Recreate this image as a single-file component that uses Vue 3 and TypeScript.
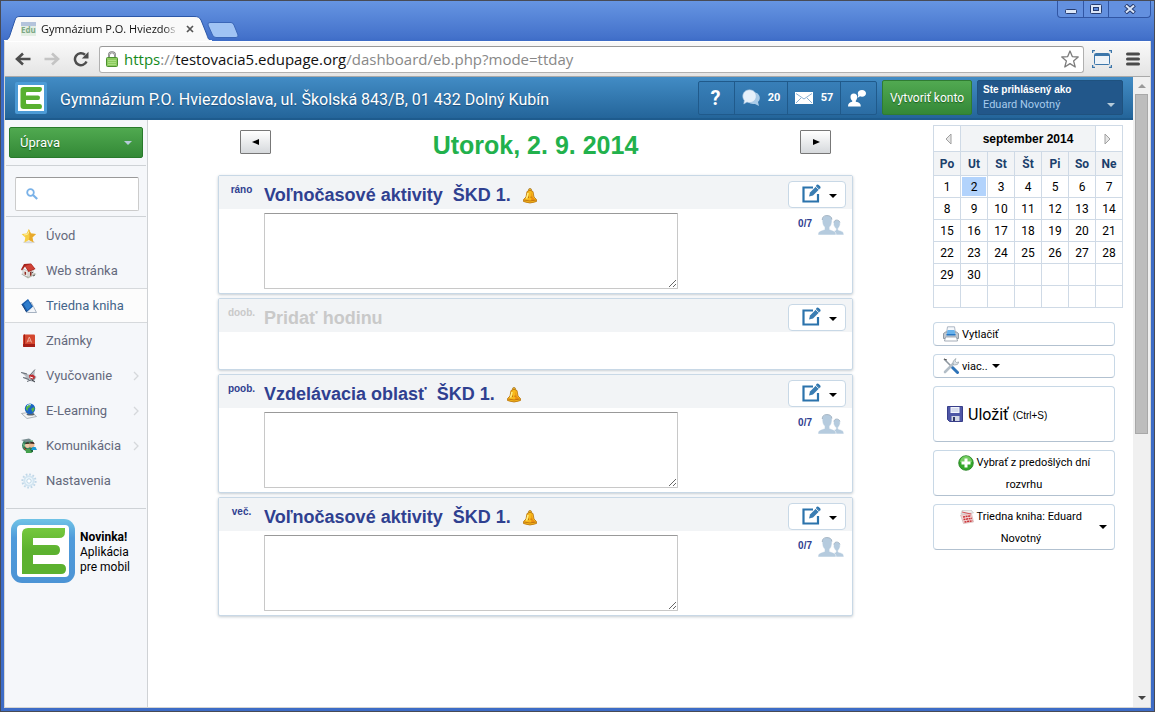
<script setup lang="ts">
import { ref } from 'vue'

interface MenuItem {
  icon: string
  label: string
  active?: boolean
  submenu?: boolean
}

interface Lesson {
  id: number
  period: string
  title: string
  empty?: boolean
  attendance?: string
}

const menu: MenuItem[] = [
  { icon: 'star', label: 'Úvod' },
  { icon: 'house', label: 'Web stránka' },
  { icon: 'notebook', label: 'Triedna kniha', active: true },
  { icon: 'book', label: 'Známky' },
  { icon: 'teaching', label: 'Vyučovanie', submenu: true },
  { icon: 'globe', label: 'E-Learning', submenu: true },
  { icon: 'people', label: 'Komunikácia', submenu: true },
  { icon: 'gear', label: 'Nastavenia' },
]

const lessons: Lesson[] = [
  { id: 1, period: 'ráno', title: 'Voľnočasové aktivity \u00a0ŠKD 1.', attendance: '0/7' },
  { id: 2, period: 'doob.', title: 'Pridať hodinu', empty: true },
  { id: 3, period: 'poob.', title: 'Vzdelávacia oblasť \u00a0ŠKD 1.', attendance: '0/7' },
  { id: 4, period: 'več.', title: 'Voľnočasové aktivity \u00a0ŠKD 1.', attendance: '0/7' },
]

const notes = ref<Record<number, string>>({ 1: '', 3: '', 4: '' })
const search = ref('')
const selectedDay = ref(2)

const weekdays = ['Po', 'Ut', 'St', 'Št', 'Pi', 'So', 'Ne']
const weeks: (number | null)[][] = Array.from({ length: 6 }, (_, w) =>
  Array.from({ length: 7 }, (_, d) => {
    const day = w * 7 + d + 1
    return day <= 30 ? day : null
  }),
)
</script>

<template>
  <div class="window">
    <header class="titlebar">
      <div class="tab">
        <svg class="tab-shape" viewBox="0 0 208 25" width="208" height="25" aria-hidden="true">
          <path d="M0 25 C4 24 5 22 6 19 L11 4 C12 1 13 .5 16 .5 H190 C194 .5 195 1 197 4 L203 19 C204 23 205 24 208 25Z" fill="#f9f9f9" stroke="#2b57a8" stroke-width="1" />
          <path d="M0 24 H208 V25 H0Z" fill="#f9f9f9" />
        </svg>
        <span class="favicon" aria-hidden="true">Edu</span>
        <span class="tab-title">Gymnázium P.O. Hviezdos</span>
        <button class="tab-close" aria-label="Zavrieť kartu">
          <svg viewBox="0 0 8 8" width="8" height="8"><path d="M1 1l6 6M7 1l-6 6" stroke="#555" stroke-width="1.7" /></svg>
        </button>
      </div>
      <button class="new-tab" aria-label="Nová karta">
        <svg viewBox="0 0 32 16" width="32" height="16">
          <path d="M3 .5H24Q26 .5 27 3L31 13Q31.500 15.500 29 15.500H9Q6.500 15.500 5.500 13L1 3Q.5 .5 3 .5Z" fill="#a0c3f4" stroke="#3a66b8" />
        </svg>
      </button>
      <div class="window-buttons">
        <button aria-label="Minimalizovať">
          <svg viewBox="0 0 12 10" width="12" height="10"><rect x=".5" y="5.500" width="11" height="4" rx="1" fill="#dbe6f8" stroke="#263c70" /></svg>
        </button>
        <button aria-label="Obnoviť">
          <svg viewBox="0 0 12 10" width="12" height="10"><rect x=".5" y=".5" width="11" height="9" rx="1" fill="#dbe6f8" stroke="#263c70" /><rect x="3.500" y="3.500" width="5" height="3" fill="#5c89dc" stroke="#263c70" /></svg>
        </button>
        <button class="wide" aria-label="Zavrieť">
          <svg viewBox="0 0 12 10" width="12" height="10"><path d="M1.500 1l9 8M10.500 1l-9 8" stroke="#263c70" stroke-width="4" /><path d="M2 1.500l8 7M10 1.500l-8 7" stroke="#dbe6f8" stroke-width="2" /></svg>
        </button>
      </div>
    </header>

    <div class="content">
      <div class="toolbar">
        <button class="nav-button" aria-label="Späť">
          <svg viewBox="0 0 16 14" width="16" height="14"><path d="M15.500 7H3M8 1.500L2 7l6 5.500" fill="none" stroke="#4d4d4d" stroke-width="2.600" /></svg>
        </button>
        <button class="nav-button" aria-label="Dopredu">
          <svg viewBox="0 0 16 14" width="16" height="14"><path d="M.5 7H13M8 1.500L14 7l-6 5.500" fill="none" stroke="#c4c4c4" stroke-width="2.600" /></svg>
        </button>
        <button class="nav-button" aria-label="Obnoviť stránku">
          <svg viewBox="0 0 16 16" width="16" height="16"><path d="M13.500 10.500A6 6 0 1 1 12 3.700" fill="none" stroke="#4d4d4d" stroke-width="2.500" /><path d="M15.500.8V7.500H8.800Z" fill="#4d4d4d" /></svg>
        </button>
        <div class="address">
          <svg viewBox="0 0 12 16" width="12" height="16" aria-hidden="true">
            <path d="M3 8V4.200a3 3 0 0 1 6 0V8" fill="none" stroke="#7b7b7b" stroke-width="2" />
            <path d="M3 8V4.200a3 3 0 0 1 6 0V8" fill="none" stroke="#d6d6d6" stroke-width=".7" />
            <rect x=".5" y="6.500" width="11" height="9" rx="1" fill="#8ccb5e" stroke="#4c9130" />
            <path d="M2 9.500h8M2 11.500h8M2 13.500h8" stroke="#a9dd82" />
          </svg>
          <div class="url" role="textbox" aria-label="Adresa" tabindex="0"><span class="scheme">https</span>://<span class="host">testovacia5.edupage.org</span>/dashboard/eb.php?mode=ttday</div>
          <button class="bookmark" aria-label="Pridať záložku">
            <svg viewBox="0 0 18 18" width="18" height="18"><path d="M9 1l2.300 5.600 5.900.4-4.600 3.900L14.200 17 9 13.600 3.800 17l1.600-6.100L.8 7l5.900-.4Z" fill="#fff" stroke="#7c7c7c" stroke-width="1.300" stroke-linejoin="round" /></svg>
          </button>
        </div>
        <button class="nav-button" aria-label="Snímka obrazovky">
          <svg viewBox="0 0 20 18" width="20" height="18"><rect x="2.500" y="3.500" width="15" height="11" rx="1" fill="#eef3f8" stroke="#3c76aa" /><path d="M3 5h14" stroke="#3c76aa" stroke-width="2" /><path d="M.5 3V.5H3M17 .5h2.500V3M.5 15v2.500H3M17 17.500h2.500V15" fill="none" stroke="#3c76aa" stroke-width="1.500" /></svg>
        </button>
        <button class="nav-button" aria-label="Ponuka">
          <svg viewBox="0 0 14 14" width="14" height="14"><path d="M1.500 2h11M1.500 7h11M1.500 12h11" stroke="#4a4a4a" stroke-width="3" stroke-linecap="round" /></svg>
        </button>
      </div>

      <div class="viewport">
        <div class="page">
          <div class="site-header">
            <svg class="logo-small" viewBox="0 0 32 32" width="32" height="32" aria-hidden="true">
              <rect width="32" height="32" rx="2" fill="#4d9bd6" />
              <rect x="3" y="3" width="26" height="26" fill="#fff" />
              <path d="M8.500 5H25Q27 5 27 7T25 10H12Q11 10 11 11V13.500H23Q25 13.500 25 15.800T23 18H11V21Q11 22 12 22H25Q27 22 27 24.500T25 27H8.500Q5.500 27 5.500 24V8Q5.500 5 8.500 5Z" fill="#58b030" />
            </svg>
            <h1>Gymnázium P.O. Hviezdoslava, ul. Školská 843/B, 01 432 Dolný Kubín</h1>
            <div class="status">
              <button class="help" aria-label="Pomoc">?</button>
              <button class="counter">
                <svg viewBox="0 0 18 18" width="18" height="18" aria-hidden="true">
                  <path d="M12 3.500a5.500 5.500 0 0 1 4 9.500l1 4-4-2.100A7 6 0 0 1 6 13Z" fill="#a9cbe8" />
                  <path d="M7.500.8c3.900 0 6.700 2.900 6.700 6.400s-2.800 6.400-6.700 6.400c-.9 0-1.800-.1-2.500-.5L1.800 15l.5-3.600C1.300 10.300.8 8.700.8 7.200.8 3.700 3.600.8 7.500.8Z" fill="#e6f0fa" stroke="#9dc0df" stroke-width=".6" />
                </svg>
                <span>20</span>
              </button>
              <button class="counter">
                <svg viewBox="0 0 18 12" width="18" height="12" aria-hidden="true">
                  <rect width="18" height="12" fill="#fff" />
                  <path d="M1 1.500l8 5.500 8-5.500M1 11l5-5M17 11l-5-5" fill="none" stroke="#7aa6cd" stroke-width=".9" />
                </svg>
                <span>57</span>
              </button>
              <button class="contact" aria-label="Kontakt">
                <svg viewBox="0 0 18 18" width="18" height="18">
                  <path d="M5.800 4.500c2.200 0 3.400 1.500 3.400 3.400S8.300 11 7.800 11.600v1.200c3.500.6 5 1.800 5 4.700H0c0-2.900 1.500-4.100 4.200-4.700v-1.200C3.400 11 2.500 9.800 2.500 7.900S3.600 4.500 5.800 4.500Z" fill="#fff" />
                  <path d="M14 1c2.400 0 4 1.300 4 3.300s-1.600 3.400-4 3.400c-.9 0-1.500-.1-2-.4L9.500 9l.8-3C10 5.500 9.800 5 9.800 4.300 9.800 2.300 11.500 1 14 1Z" fill="#fff" />
                </svg>
              </button>
            </div>
            <button class="create-account">Vytvoriť konto</button>
            <button class="user">
              <span class="user-text"><b>Ste prihlásený ako</b><span>Eduard Novotný</span></span>
              <i class="caret light"></i>
            </button>
          </div>

          <div class="columns">
            <aside class="sidebar">
              <div class="edit-mode">
                <button>Úprava<i class="caret light"></i></button>
              </div>
              <div class="search-row">
                <label class="search">
                  <svg viewBox="0 0 12 12" width="12" height="12" aria-hidden="true"><circle cx="4.500" cy="4.500" r="3.300" fill="none" stroke="#7ab2e8" stroke-width="1.800" /><path d="M7 7l4.200 4" stroke="#7ab2e8" stroke-width="2.200" /></svg>
                  <input v-model="search" type="text" aria-label="Hľadať" />
                </label>
              </div>
              <nav>
                <a v-for="item in menu" :key="item.label" href="#" :class="{ active: item.active }">
                  <svg viewBox="0 0 16 16" width="16" height="16" aria-hidden="true">
                    <template v-if="item.icon === 'star'">
                      <ellipse cx="8" cy="14.200" rx="6" ry="1" fill="#d6d8da" />
                      <path d="M7.800 1l2.100 4.400 5.100.5-3.700 3.500 1.200 4.900-4.500-2.400-4.600 2.500.9-5L.6 6l5-.6Z" fill="#f7cf43" />
                      <path d="M7.800 1l2.100 4.400 5.100.5-3.700 3.500 1.200 4.900-4.500-2.400L8.500 8Z" fill="#e8a92c" />
                      <path d="M3 7l3.500-.6L8 3.500" fill="none" stroke="#fdeea0" />
                    </template>
                    <template v-else-if="item.icon === 'house'">
                      <path d="M0 11l7 4.500L15.500 11l-5-2Z" fill="#b4b8ab" />
                      <path d="M2 6l5 2v6l-5-2Z" fill="#f1efec" stroke="#999" stroke-width=".5" />
                      <path d="M7 8l6-3v6l-6 3Z" fill="#d9d5d2" />
                      <path d="M0 6.500l3-5.500L10 .5 14.500 6 7.500 9 4 3.500 1 7.500Z" fill="#a6231c" />
                      <path d="M4 3l6-2 3.500 4.700L8 8Z" fill="#cf4236" />
                      <path d="M3.500 8.500l1.600.6v3l-1.600-.6ZM9 9l1.500-.8v4L9 13Z" fill="#8d2c22" />
                      <path d="M10.500 10l1.500-.7M12 13l2-1" stroke="#555" />
                    </template>
                    <template v-else-if="item.icon === 'notebook'">
                      <path d="M10 4l5.500 10.500H6Z" fill="#f3f6fa" stroke="#90a0b2" stroke-width=".8" />
                      <path d="M.8 6L7 1l5 7.500-6.300 5.800Z" fill="#185cab" />
                      <path d="M2.800 6.200L7 2.600l3.500 5.600-4.200 4Z" fill="#2f7dcc" />
                      <path d="M.8 6l4.900 8.300" stroke="#143c74" />
                      <path d="M5.700 14.800l7-6" stroke="#dce5ef" />
                    </template>
                    <template v-else-if="item.icon === 'book'">
                      <path d="M2 2.500Q2 1.500 3 1.500H13Q14 1.500 14 2.500V14H3Q2 14 2 13Z" fill="#d4472f" />
                      <path d="M2 11h12v3H3q-1 0-1-1Z" fill="#a51f17" />
                      <path d="M3.500 1.500V14" stroke="#9d1f17" />
                      <path d="M6 9.500L8.300 4l2.300 5.500M7 8h2.700" fill="none" stroke="#f3b6a4" stroke-width=".9" />
                    </template>
                    <template v-else-if="item.icon === 'teaching'">
                      <path d="M0 4l4 .8 4 2L10 6l4-4.500L13.500 7l2 2-3 5-5-1.500L2 9.500l3-.7Z" fill="#b6bbc1" />
                      <path d="M0 4.500l6 1.500M2 9.500l6 2M14 1.500L9 7M6 13.500l8-3" stroke="#5b626b" stroke-width=".9" />
                      <path d="M8 7l4-.5 2.500 2.500L12 11.500 8.500 10Z" fill="#c02c31" />
                      <path d="M9 9l3 1" stroke="#fff" /><path d="M11 12l3 2" stroke="#34383e" />
                    </template>
                    <template v-else-if="item.icon === 'globe'">
                      <path d="M.5 10.500L10 9l5.500 4.500-9.500 2Z" fill="#f4f4f4" stroke="#8f989f" stroke-width=".7" />
                      <ellipse cx="9.500" cy="11.300" rx="4" ry="1.300" fill="#56646e" />
                      <circle cx="9" cy="5.800" r="5.200" fill="#1b64c4" />
                      <path d="M5 4q2-3 5-2.500L9 4 7 5.500 6.500 8 5 6.500ZM10 6l3-2 .7 2-2 3.300Z" fill="#56b548" />
                      <path d="M6 3q1.500-2 4-1.300" fill="none" stroke="#c6e7ef" />
                    </template>
                    <template v-else-if="item.icon === 'people'">
                      <circle cx="7" cy="7.500" r="6" fill="#3b8261" />
                      <path d="M0 2l8-1.500L12 3 5 4Z" fill="#798d91" />
                      <path d="M2 4l2 4 3 5-4-2ZM8 11l4-1v4l-4 1Z" fill="#1f643a" />
                      <path d="M2 5l2 2-1 3ZM9 2l3 0-1 2Z" fill="#8ccf9c" />
                      <circle cx="6.500" cy="7.500" r="2.500" fill="#edc8a8" /><circle cx="10.800" cy="7" r="2.700" fill="#e9b68f" />
                      <path d="M4 6q1-2.500 4-1.600l.4 1.400ZM8.500 5.500q1-2.600 4-1.500l1.200 2Z" fill="#37271f" />
                      <path d="M10 12l1.500-3H14.500L16 12Z" fill="#1b9bd8" />
                      <path d="M4.500 11h4.500l2 4H5Z" fill="#44a04c" /><path d="M3 10l2 2" stroke="#c23a28" />
                    </template>
                    <template v-else>
                      <circle cx="8" cy="8" r="6.600" fill="none" stroke="#bfd7e8" stroke-width="2" stroke-dasharray="1.700 1.750" />
                      <circle cx="8" cy="8" r="4.700" fill="#eef7fc" stroke="#d3e5f1" stroke-width="2" />
                      <circle cx="8" cy="8" r="2.200" fill="#fff" stroke="#aecbdf" stroke-width=".8" />
                    </template>
                  </svg>
                  <span>{{ item.label }}</span>
                  <svg v-if="item.submenu" class="chevron" viewBox="0 0 6 10" width="6" height="10" aria-hidden="true"><path d="M1 1l4 4-4 4" fill="none" stroke="#d5d8db" stroke-width="1.300" /></svg>
                </a>
              </nav>
              <a class="promo" href="#">
                <svg viewBox="0 0 64 64" width="64" height="64" aria-hidden="true">
                  <defs>
                    <linearGradient id="frame" x2="0" y2="1"><stop offset="0" stop-color="#70c3e6" /><stop offset=".3" stop-color="#4f9bdb" /><stop offset="1" stop-color="#4c94d5" /></linearGradient>
                    <linearGradient id="letter" x2="0" y2="1"><stop offset="0" stop-color="#76c83e" /><stop offset=".5" stop-color="#5cb12f" /></linearGradient>
                  </defs>
                  <rect width="64" height="64" rx="11" fill="url(#frame)" />
                  <rect x="6" y="6" width="52" height="52" rx="4" fill="#fff" />
                  <path d="M17 9H54V13Q54 19 48 19H22V26H44Q49 26 49 31T44 36H22V45H50Q55 45 55 50T50 55H11V15Q11 9 17 9Z" fill="url(#letter)" />
                </svg>
                <span><b>Novinka!</b><br />Aplikácia<br />pre mobil</span>
              </a>
            </aside>

            <main>
              <div class="day-bar">
                <button aria-label="Predchádzajúci deň"><svg viewBox="0 0 8 6" width="8" height="6"><path d="M0 3L7 0V6Z" /></svg></button>
                <h2>Utorok, 2. 9. 2014</h2>
                <button aria-label="Nasledujúci deň"><svg viewBox="0 0 8 6" width="8" height="6"><path d="M8 3L1 0V6Z" /></svg></button>
              </div>
              <section v-for="lesson in lessons" :key="lesson.id" class="card" :class="{ empty: lesson.empty }">
                <div class="card-head">
                  <span class="period">{{ lesson.period }}</span>
                  <h3>{{ lesson.title }}</h3>
                  <svg v-if="!lesson.empty" class="bell" viewBox="0 0 14 16" width="14" height="16" aria-hidden="true">
                    <circle cx="7" cy="2" r="1.500" fill="#f6c12d" stroke="#9a6413" stroke-width=".7" />
                    <path d="M4 3.500q3-2.500 6 0l1 5.500 2.500 2.500v2Q7 16.500.5 13.500v-2L3 9Z" fill="#f7b91c" stroke="#b6700d" stroke-width=".8" />
                    <path d="M5 5q-.5 3-1.500 5.500" fill="none" stroke="#ffef85" stroke-width="1.500" />
                    <path d="M8.500 4l1.200 5 2.500 3-4 1Z" fill="#ed8f12" />
                    <path d="M1 12q6 2 12 0M5.500 8.500v1.500M8 8.500v1.500" fill="none" stroke="#b5670d" stroke-width=".8" />
                  </svg>
                  <button class="edit" aria-label="Upraviť hodinu">
                    <svg viewBox="0 0 20 20" width="20" height="20">
                      <path d="M12 3.500H2.500V17.500H17V10" fill="none" stroke="#2b73ac" stroke-width="2.200" />
                      <path d="M8 12.500l1-4 6.500-6.500 3 3-6.500 6.500Z" fill="#3a7db2" />
                      <path d="M15 1.500Q16.500-.3 18 1.200L19 2.200Q20.300 3.500 18.700 5Z" fill="#2b73ac" />
                      <path d="M14.500 2.500l3.200 3.200" stroke="#fff" stroke-width=".8" />
                    </svg>
                    <i class="caret"></i>
                  </button>
                </div>
                <div class="card-body">
                  <template v-if="!lesson.empty">
                    <textarea v-model="notes[lesson.id]" :aria-label="`Poznámka – ${lesson.title}`"></textarea>
                    <a class="attendance" href="#">
                      <b>{{ lesson.attendance }}</b>
                      <svg viewBox="0 0 26 20" width="26" height="20" aria-hidden="true">
                        <path d="M14 20q.5-4 4-5l-.2-1.500C16 12 15.200 10 15.500 8c.3-2 1.500-3 3.200-3s3.300 1 3.500 3c.3 2-.6 4.200-2 5.300v1.700c3.500 1 5.800 1.500 5.800 5Z" fill="#b5cbde" stroke="#fff" stroke-width=".6" />
                        <path d="M0 20c0-3.500 2-4.200 6.500-5.500V12C4.800 10.500 4 8 4.200 4.500 4.400 1.500 6.500.5 9 .5s4.800 1 5 4C14.200 8 13.400 10.500 11.700 12v2.500C16 15.800 18 16.500 18 20Z" fill="#b5cbde" stroke="#fff" stroke-width=".5" />
                        <path d="M4.300 5C4.200 1.500 6.500.6 9 .6s4.700.9 4.900 3.900M16 7.500c.3-1.800 1.400-2.400 2.700-2.400s2.800.6 3.200 2.400" fill="none" stroke="#9aacbc" stroke-width=".9" />
                      </svg>
                    </a>
                  </template>
                </div>
              </section>
            </main>

            <div class="tools">
              <table class="calendar">
                <thead>
                  <tr class="month">
                    <td><button aria-label="Predchádzajúci mesiac"><svg viewBox="0 0 8 12" width="8" height="12"><path d="M1 6l5-5v10Z" fill="#e6e6e6" stroke="#a0a0a0" /></svg></button></td>
                    <th colspan="5">september 2014</th>
                    <td><button class="next" aria-label="Nasledujúci mesiac"><svg viewBox="0 0 8 12" width="8" height="12"><path d="M7 6L2 1v10Z" fill="#e6e6e6" stroke="#a0a0a0" /></svg></button></td>
                  </tr>
                  <tr class="weekdays"><th v-for="name in weekdays" :key="name" scope="col">{{ name }}</th></tr>
                </thead>
                <tbody>
                  <tr v-for="(week, w) in weeks" :key="w">
                    <td v-for="(day, d) in week" :key="d">
                      <button v-if="day" :class="{ selected: day === selectedDay }" @click="selectedDay = day">{{ day }}</button>
                    </td>
                  </tr>
                </tbody>
              </table>

              <div class="actions">
                <button class="row">
                  <svg viewBox="0 0 16 16" width="16" height="16" aria-hidden="true">
                    <path d="M4.500.8h7L12.500 7h-9Z" fill="#f5f8fc" stroke="#9aa7b6" stroke-width=".8" />
                    <path d="M.5 7.500L2.500 6h11l2 1.500v5H.5Z" fill="#c2c9d1" stroke="#7c8791" stroke-width=".8" />
                    <path d="M4.500 4h7l1 5h-9Z" fill="#68b2ec" /><path d="M3.500 8h9v1.500h-9Z" fill="#2777c5" />
                    <path d="M2.500 11h11l1 4h-13Z" fill="#fff" stroke="#8d98a4" stroke-width=".8" />
                  </svg>
                  Vytlačiť
                </button>
                <button class="row">
                  <svg viewBox="0 0 16 16" width="16" height="16" aria-hidden="true">
                    <path d="M1 1l8 8" stroke="#8e979f" stroke-width="1.600" /><path d="M1 1l3 1" stroke="#555" />
                    <path d="M9.500 9.500l5 5" stroke="#2d73b8" stroke-width="3" stroke-linecap="round" />
                    <path d="M2 14L11 5" stroke="#b3bec7" stroke-width="2.600" stroke-linecap="round" />
                    <path d="M10 6q-.8-3.500 3-5.500L12 3l1.500 1.500L16 4q-1 3.500-4.500 3Z" fill="#dce1e5" stroke="#8d989f" stroke-width=".6" />
                  </svg>
                  viac.. <i class="caret"></i>
                </button>
                <button class="save">
                  <svg viewBox="0 0 16 16" width="16" height="16" aria-hidden="true">
                    <path d="M.5.5H15.500V15.500H2.500L.5 13.500Z" fill="#4e56a6" stroke="#373e8a" />
                    <path d="M3.500 1h9v6h-9Z" fill="#f3f5fc" /><path d="M4.500 3h7M4.500 5h7" stroke="#b9c1dd" />
                    <path d="M4.500 10h8v5h-8Z" fill="#d3d7e4" /><path d="M6 11h2v4H6Z" fill="#303866" />
                  </svg>
                  <span class="save-label">Uložiť</span> <span class="shortcut">(Ctrl+S)</span>
                </button>
                <button class="double">
                  <span class="double-text"><svg viewBox="0 0 16 16" width="16" height="16" aria-hidden="true">
                    <circle cx="8" cy="8" r="7.300" fill="#35a82b" stroke="#237f22" stroke-width=".8" />
                    <path d="M2 7a6 6 0 0 1 12 0q-6 2-12 0Z" fill="#74cc62" />
                    <path d="M8 3.500v9M3.500 8h9" stroke="#fff" stroke-width="3" />
                  </svg> Vybrať z predošlých dní rozvrhu</span>
                </button>
                <button class="double with-caret">
                  <span class="double-text"><svg viewBox="0 0 14 14" width="14" height="14" aria-hidden="true">
                    <path d="M1 4l1-3.500 9-.5 2.500 3Z" fill="#efefef" stroke="#bbb" stroke-width=".6" />
                    <path d="M.5 5l11-1.500L13.500 12 3.500 13.500Z" fill="#f3d6d6" stroke="#caa" stroke-width=".6" />
                    <path d="M3 7l8-1.200M3.500 9.500l8.500-1.200M4.500 12l8-1.200" stroke="#c93338" stroke-width="1.500" stroke-dasharray="2 .6" />
                    <path d="M2 2l9 2" stroke="#d65357" />
                  </svg> Triedna kniha: Eduard Novotný</span>
                  <i class="caret"></i>
                </button>
              </div>
            </div>
          </div>
        </div>

        <div class="scrollbar" aria-hidden="true">
          <i class="arrow up"></i>
          <div class="thumb"></div>
          <i class="arrow down"></i>
        </div>
      </div>
    </div>
  </div>
</template>

<style>
body {
  margin: 0;
}
</style>

<style scoped>
* {
  box-sizing: border-box;
}
button {
  margin: 0;
  padding: 0;
  border: 0;
  background: none;
  font: inherit;
  color: inherit;
  cursor: pointer;
}
a {
  color: inherit;
  text-decoration: none;
}
h1,
h2,
h3 {
  margin: 0;
}
svg {
  flex: none;
}

.window {
  display: flex;
  flex-direction: column;
  min-height: 100vh;
  padding: 0 3px 3px;
  border: 1px solid #484b55;
  background: linear-gradient(#6695e2, #4472cb 36px, #3d6cc6 40px);
  font-family: Roboto, "Liberation Sans", sans-serif;
  font-size: 13px;
}
.titlebar {
  display: flex;
  height: 40px;
}
.tab {
  position: relative;
  display: flex;
  align-items: center;
  align-self: flex-end;
  width: 208px;
  height: 25px;
  padding: 0 18px 0 17px;
  font-family: "Open Sans", "Noto Sans", sans-serif;
  font-size: 11px;
}
.tab-shape {
  position: absolute;
  inset: 0;
}
.favicon {
  position: relative;
  width: 15px;
  height: 14px;
  overflow: hidden;
  background: linear-gradient(#b4c4dc 4px, #e4eee4 4px);
  color: #7da884;
  font-size: 8px;
  font-weight: 700;
  line-height: 16px;
}
.tab-title {
  position: relative;
  flex: 1;
  margin-left: 5px;
  color: #111;
  white-space: nowrap;
  mask-image: linear-gradient(90deg, #000 90%, transparent);
}
.tab-close {
  position: relative;
  display: flex;
  margin-left: 8px;
}
.new-tab {
  display: flex;
  align-self: flex-end;
  margin: 0 0 3px -5px;
}
.window-buttons {
  display: flex;
  height: 17px;
  margin-left: auto;
  border: 1px solid #3156a4;
  border-top: 0;
  border-radius: 0 0 4px 4px;
  background: #6390df;
}
.window-buttons button {
  display: flex;
  align-items: center;
  justify-content: center;
  width: 25px;
}
.window-buttons button + button {
  border-left: 1px solid #3156a4;
}
.window-buttons .wide {
  width: 42px;
}

.content {
  display: flex;
  flex: 1;
  flex-direction: column;
  border: 1px solid #d5d5d2;
  border-top: 0;
  background: #fff;
}
.toolbar {
  display: flex;
  align-items: center;
  height: 36px;
  padding: 0 10px;
  border-bottom: 1px solid #a9a9a9;
  border-top: 1px solid #fff;
  background: linear-gradient(#f9f9f9, #e4e4e4);
}
.nav-button {
  display: flex;
  justify-content: center;
  width: 16px;
  margin-right: 13px;
}
.address {
  display: flex;
  flex: 1;
  align-items: center;
  height: 27px;
  margin-right: 8px;
  margin-left: -3px;
  padding: 0 4px 0 6px;
  border: 1px solid #b0b0b0;
  border-top-color: #999;
  border-radius: 3px;
  background: #fff;
}
.url {
  flex: 1;
  margin-left: 6px;
  color: #888;
  font-family: "Open Sans", "Noto Sans", sans-serif;
  font-size: 15px;
  line-height: 24px;
}
.scheme {
  color: #158a1c;
}
.host {
  color: #111;
}
.bookmark {
  display: flex;
}
.address ~ .nav-button {
  width: 20px;
  margin-right: 14px;
}
.address ~ .nav-button:last-child {
  width: 14px;
  margin-right: 0;
}

.viewport {
  display: flex;
  flex: 1;
}
.page {
  display: flex;
  flex: 1;
  flex-direction: column;
  min-width: 0;
}
.site-header {
  display: flex;
  align-items: center;
  height: 43px;
  padding: 0 10px;
  border-bottom: 2px solid #1e5b8d;
  background: linear-gradient(#428cc5, #24659a);
  color: #fff;
}
.site-header h1 {
  flex: 1;
  margin-left: 13px;
  padding-top: 4px;
  font-size: 16px;
  font-weight: 400;
  white-space: nowrap;
  text-shadow: 0 1px 1px #1a4c78;
}
.status {
  display: flex;
  height: 34px;
  border: 1px solid #205a8b;
  border-radius: 2px;
  background: linear-gradient(#387fb8, #2b6da4);
}
.status button {
  display: flex;
  align-items: center;
  justify-content: center;
  width: 53px;
  font-size: 11px;
  font-weight: 700;
}
.status button + button {
  border-left: 1px solid #205a8b;
}
.status .help {
  width: 35px;
  padding-right: 2px;
  font-size: 20px;
}
.counter span {
  margin-left: 8px;
}
.status .contact {
  width: 36px;
  padding-right: 3px;
}
.create-account {
  height: 35px;
  width: 90px;
  margin-left: 5px;
  border: 1px solid #2f7c32;
  border-radius: 2px;
  background: linear-gradient(#51a951, #348837);
  font-size: 12px;
  text-shadow: 0 1px 1px #1d601f;
}
.user {
  display: flex;
  align-items: flex-end;
  width: 146px;
  height: 35px;
  margin-left: 5px;
  padding: 0 7px 0 5px;
  border: 1px solid #1f527f;
  border-radius: 2px;
  background: #22578a;
  text-align: left;
}
.user-text {
  display: flex;
  flex: 1;
  flex-direction: column;
  font-size: 11px;
  line-height: 15px;
  padding-bottom: 2px;
}
.user-text b {
  font: 700 10px/15px "Liberation Sans", Arial, sans-serif;
}
.user-text span {
  color: #a7cbec;
}
.caret {
  border: 4px solid transparent;
  border-top-color: #000;
  border-bottom: 0;
}
.caret.light {
  border-top-color: #b6cbd9;
}
.user .caret {
  margin-bottom: 7px;
}

.columns {
  display: flex;
  flex: 1;
}
.sidebar {
  flex: none;
  width: 143px;
  border-right: 1px solid #cfd2d5;
  background: #f5f7fa;
}
.edit-mode {
  margin: 0 1px;
  padding: 7px 3px;
  border-bottom: 1px solid #ced2d6;
}
.edit-mode button {
  display: flex;
  align-items: center;
  justify-content: space-between;
  width: 100%;
  height: 31px;
  padding: 0 10px;
  border: 1px solid #287a2b;
  border-radius: 2px;
  background: linear-gradient(#50a950, #338936);
  color: #fff;
  text-shadow: 0 1px 1px #1d601f;
}
.search-row {
  margin: 0 1px;
  padding: 11px 7px 5px 9px;
  border-bottom: 1px solid #ced2d6;
}
.search {
  display: flex;
  align-items: center;
  height: 34px;
  padding: 0 10px;
  border: 1px solid #ccc;
  border-top-color: #999;
  border-radius: 2px;
  background: #fff;
}
.search input {
  flex: 1;
  min-width: 0;
  padding: 0 4px;
  border: 0;
  outline: 0;
  font: inherit;
}
nav {
  margin-top: 1px;
}
nav a {
  display: flex;
  align-items: center;
  height: 35px;
  padding: 0 8px 0 16px;
  border: solid transparent;
  border-width: 1px 0;
  color: #64697c;
}
nav a span {
  flex: 1;
  margin-left: 9px;
}
nav a.active {
  border-color: #d6d9dc;
  background: #fcfcfc;
  color: #44658a;
}
.promo {
  display: flex;
  align-items: center;
  gap: 5px;
  margin: 10px 1px 0;
  padding: 10px 5px;
  border-top: 1px solid #ced2d6;
  color: #000;
  font-size: 12px;
  line-height: 15px;
}
.promo span {
  padding-top: 2px;
}

main {
  flex: 1;
  margin: 0 80px 0 70px;
}
.day-bar {
  display: flex;
  align-items: flex-start;
  justify-content: space-between;
  height: 55px;
  padding: 10px 22px 0;
}
.day-bar button {
  display: flex;
  align-items: center;
  justify-content: center;
  width: 31px;
  height: 24px;
  border: 1px solid #777;
  border-radius: 1px;
  background: linear-gradient(#fff, #d6d9dc);
}
.day-bar h2 {
  color: #22b14c;
  font: 700 25px/30px "Liberation Sans", Arial, sans-serif;
}
.card {
  margin-bottom: 4px;
  border: 1px solid #c8d8e6;
  border-radius: 2px;
  background: #fff;
  box-shadow: 0 1px 3px #c4cbd1;
  color: #2f4090;
  font-family: "Liberation Sans", Arial, sans-serif;
}
.card-head {
  display: flex;
  align-items: flex-start;
  height: 33px;
  padding: 5px 6px 0 0;
  background: #f2f4f6;
}
.period {
  width: 45px;
  font-size: 10px;
  font-weight: 700;
  line-height: 18px;
  text-align: center;
}
.card h3 {
  font-size: 18px;
  line-height: 28px;
}
.bell {
  margin: 7px 0 0 12px;
}
.empty .period,
.empty h3 {
  color: #c9c9c9;
}
.edit {
  display: flex;
  align-items: center;
  gap: 8px;
  width: 58px;
  height: 27px;
  margin-left: auto;
  padding: 0 8px 2px 12px;
  border: 1px solid #c8d8e6;
  border-radius: 4px;
  background: #fff;
}
.edit .caret {
  margin-top: 4px;
}
.card-body {
  display: flex;
  align-items: flex-start;
  justify-content: space-between;
  min-height: 37px;
  padding: 4px 8px 4px 45px;
}
.card-body textarea {
  width: 414px;
  height: 76px;
  margin: 0;
  padding: 4px;
  border: 1px solid #c8c8c8;
  border-top-color: #999;
  border-radius: 1px;
  background: #fff;
  font: 13px "Liberation Sans", Arial, sans-serif;
}
.attendance {
  display: flex;
  gap: 6px;
  padding-top: 2px;
  font-size: 10px;
  line-height: 18px;
}

.tools {
  flex: none;
  width: 190px;
  margin-right: 10px;
  padding-top: 5px;
}
.calendar {
  width: 100%;
  border-collapse: collapse;
  table-layout: fixed;
  font-size: 12px;
}
.calendar td,
.calendar th {
  height: 22px;
  padding: 1px;
  border: 1px solid #cfdae6;
  text-align: center;
}
.calendar .month > * {
  height: 26px;
}
.calendar .weekdays th {
  height: 24px;
  color: #1b3f6b;
}
.calendar th {
  background: #f2f4f6;
}
.calendar .month th {
  font: 700 12px "Liberation Sans", Arial, sans-serif;
}
.calendar td button {
  display: block;
  width: 100%;
  height: 19px;
  padding-top: 1px;
  line-height: 18px;
}
.calendar .month button {
  display: flex;
  align-items: center;
  justify-content: center;
  padding: 0 0 0 3px;
}
.calendar .month .next {
  padding: 0 4px 0 0;
}
.calendar .selected {
  background: #b2d3fc;
}
.actions {
  display: flex;
  flex-direction: column;
  gap: 8px;
  width: 182px;
  margin-top: 14px;
}
.actions button {
  display: flex;
  align-items: center;
  min-height: 24px;
  padding: 0 9px;
  border: 1px solid #c8d8e6;
  border-bottom-color: #b2c1d0;
  border-radius: 4px;
  background: #fff;
  color: #000;
  font-size: 11px;
}
.row svg {
  margin-right: 3px;
}
.row .caret {
  margin-left: 4px;
}
.actions .save {
  height: 56px;
  padding: 0 13px;
}
.save-label {
  margin: 0 4px 0 5px;
  font-size: 16px;
}
.shortcut {
  padding-top: 3px;
  font: 10px "Liberation Sans", Arial, sans-serif;
}
.double-text {
  flex: 1;
  padding-top: 1px;
  line-height: 22px;
}
.double-text svg {
  vertical-align: middle;
}
.actions .double {
  height: 46px;
}
.actions .with-caret {
  padding-right: 7px;
}

.scrollbar {
  display: flex;
  flex: none;
  flex-direction: column;
  width: 17px;
  padding: 7px 2px;
  background: #f0f0f0;
}
.arrow {
  align-self: center;
  border: 4px solid transparent;
}
.up {
  border-top: 0;
  border-bottom-color: #9a9a9a;
}
.down {
  margin-top: auto;
  border-bottom: 0;
  border-top-color: #444;
}
.thumb {
  height: 340px;
  margin-top: 6px;
  border: 1px solid #a8a8a8;
  background: #bdbdbd;
}
</style>
